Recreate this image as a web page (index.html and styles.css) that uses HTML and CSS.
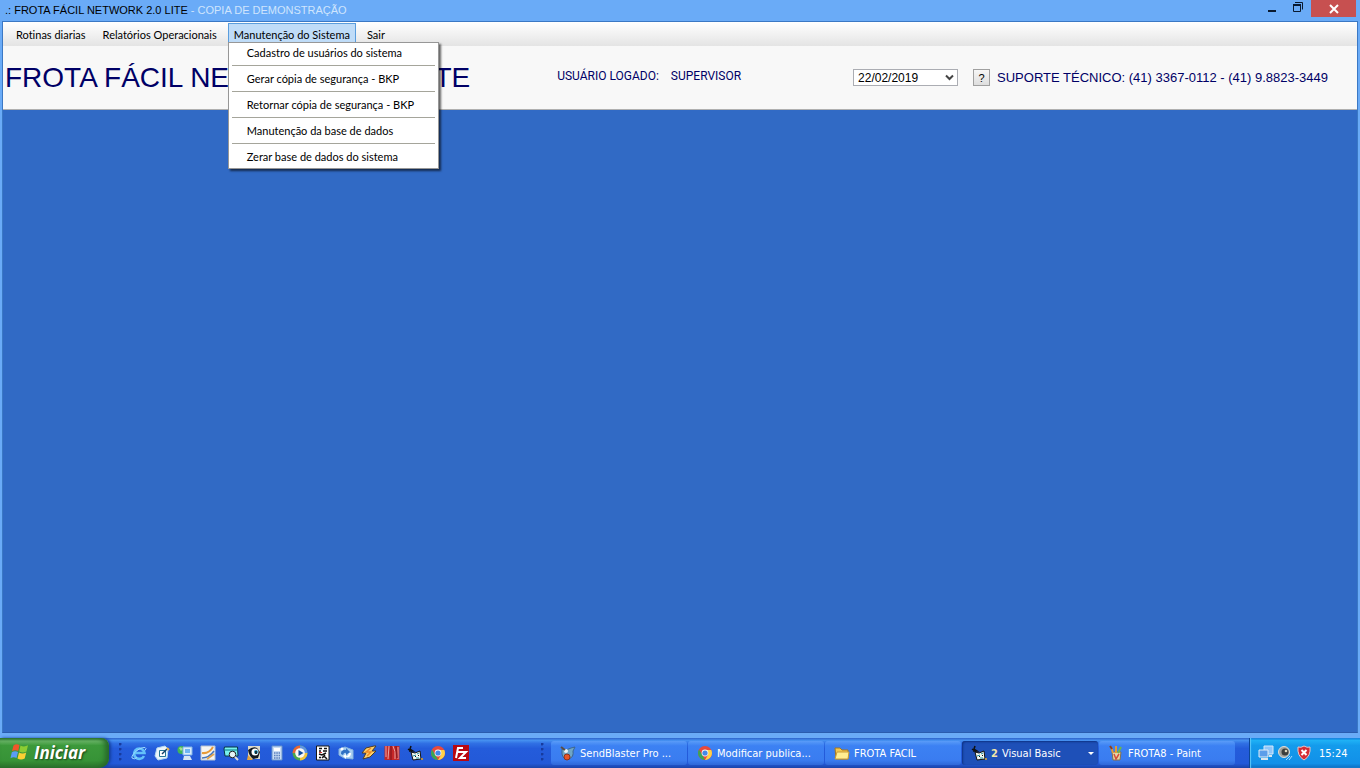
FILE: index.html
```
<!DOCTYPE html>
<html lang="pt-BR">
<head>
    <meta charset="UTF-8">
    <meta name="viewport" content="width=device-width, initial-scale=1.0">
    <title>Frota Fácil Network 2.0 Lite</title>
    <link rel="stylesheet" href="styles.css">
</head>
<body>
    <div class="window">
        <header class="title-bar">
            <div class="title-text">.: FROTA FÁCIL NETWORK 2.0 LITE <span class="demo">- COPIA DE DEMONSTRAÇÃO</span></div>
            <div class="window-buttons">
                <button class="win-btn" aria-label="Minimizar">
                    <svg width="10" height="12" viewBox="0 0 10 12"><rect x="1" y="9" width="8" height="2" fill="#0a1a30"/></svg>
                </button>
                <button class="win-btn" aria-label="Restaurar">
                    <svg width="12" height="12" viewBox="0 0 12 12" fill="none" stroke="#0a1a30"><path d="M1 3.500h8M1.500 3v7.500h7v-7.500M1 4.500h8M3 1.500h7.500v7"/></svg>
                </button>
                <button class="win-btn close" aria-label="Fechar">
                    <svg width="10" height="10" viewBox="0 0 10 10" stroke="#fff" stroke-width="2"><path d="M1 1l8 8M9 1l-8 8"/></svg>
                </button>
            </div>
        </header>

        <div class="client">
            <nav class="menu-bar">
                <button class="menu">Rotinas diarias</button>
                <button class="menu">Relatórios Operacionais</button>
                <div class="menu-open">
                    <button class="menu active">Manutenção do Sistema</button>
                    <div class="dropdown">
                        <button class="item">Cadastro de usuários do sistema</button>
                        <hr>
                        <button class="item">Gerar cópia de segurança - BKP</button>
                        <hr>
                        <button class="item">Retornar cópia de segurança - BKP</button>
                        <hr>
                        <button class="item">Manutenção da base de dados</button>
                        <hr>
                        <button class="item">Zerar base de dados do sistema</button>
                    </div>
                </div>
                <button class="menu">Sair</button>
            </nav>

            <section class="info-bar">
                <h1>FROTA FÁCIL NETWORK&nbsp;&nbsp; 2.0&nbsp; LITE</h1>
                <p class="user"><span>USUÁRIO LOGADO:</span><span>SUPERVISOR</span></p>
                <div class="support">
                    <div class="date-box">
                        <select class="date" aria-label="Data">
                            <option>22/02/2019</option>
                        </select>
                        <svg class="arrow" width="9" height="7" viewBox="0 0 9 7" fill="none" stroke="#444" stroke-width="2"><path d="M1 1.500l3.500 3.500l3.500-3.500"/></svg>
                    </div>
                    <button class="help">?</button>
                    <span class="phone">SUPORTE TÉCNICO: (41) 3367-0112 - (41) 9.8823-3449</span>
                </div>
            </section>

            <main class="workspace"></main>
        </div>
    </div>

    <footer class="taskbar">
        <button class="start">
            <svg width="20" height="18" viewBox="0 0 20 18">
                <path d="M3.500 2.500Q6 .5 9.500 2L8.200 8Q5 6.500 2 8.200Z" fill="#f0562a"/>
                <path d="M10.500 2.500Q14 4.500 18 2.300L16.500 8.500Q13 10.300 9.200 8.500Z" fill="#8ccc33"/>
                <path d="M1.800 9.200Q5 7.500 8 9L6.500 15Q3.500 13.600 .5 15.200Z" fill="#5b9cf5"/>
                <path d="M9 9.500Q12.500 11.300 16.200 9.500L14.700 15.500Q11 17.500 7.500 15.500Z" fill="#fbd033"/>
            </svg>
            Iniciar
        </button>

        <div class="quick-launch">
            <div class="grip"></div>
            <svg viewBox="0 0 16 16" fill="none"><path d="M13 11a5.200 5.200 0 1 1 .5-3H4" stroke="#63c1fa" stroke-width="2.600"/><path d="M1 13C0 10 8 2 14 2.500q2 .5 0 3M1 13q2 2 5-.5" stroke="#9fdcff" stroke-width="1"/></svg>
            <svg viewBox="0 0 16 16"><path d="M3 3l8-2l3 3l-1 9l-9 2l-3-4z" fill="#e9f5fb" stroke="#b5d8f0"/><path d="M5.500 5.500h6v6h-6z" fill="#fff" stroke="#257796"/><path d="M8 9l5-5" stroke="#123f67" stroke-width="1.500" fill="none"/><path d="M13 3l2 2" stroke="#eab54d" stroke-width="2"/></svg>
            <svg viewBox="0 0 16 16"><circle cx="4.500" cy="5" r="4" fill="#40b35b"/><path d="M2 3q2-2 4 1l-2 2z" fill="#a8dc8c"/><path d="M6 2h9v8H6z" fill="#d9ecfc" stroke="#83b6e8"/><path d="M8 4h5v4H8z" fill="#70b5f3"/><path d="M7 11h6l2 4H6z" fill="#d8e5f2"/></svg>
            <svg viewBox="0 0 16 16"><path d="M1 1h14v14H1z" fill="#f4f5f3" stroke="#b7c4d1"/><path d="M2 8q7 1 11-6" stroke="#e79b38" stroke-width="2" fill="none"/><path d="M2 13q7 0 12-7" stroke="#4777b9" stroke-width="1.500" fill="none"/><path d="M7 14l7-5" stroke="#e1a34e" stroke-width="2"/></svg>
            <svg viewBox="0 0 16 16"><path d="M1.500 2h13l.5 9H2L1 4z" fill="#77f1ed" stroke="#073444"/><path d="M1 5h14" stroke="#087783"/><circle cx="9.500" cy="9.500" r="3.300" fill="#e5f4f6" stroke="#222"/><path d="M12 12l3 3" stroke="#ddd" stroke-width="2"/></svg>
            <svg viewBox="0 0 16 16"><path d="M2 1h12v13H2z" fill="#dbdacd"/><path d="M2 5q5-4 9-2l3 4l-2 6l-5 1q-4-3-5-9z" fill="#131a20"/><circle cx="9" cy="7" r="3.500" fill="#fff"/><circle cx="10" cy="7" r="2" fill="#2794bb"/><path d="M2 10l5 5H1z" fill="#e4a33c"/><path d="M10 6v3" stroke="#111" stroke-width="1.500"/></svg>
            <svg viewBox="0 0 16 16"><path d="M3 1h10v14H3z" fill="#c8dcf4" stroke="#6792cb"/><path d="M5 3h6v3H5z" fill="#fff"/><path d="M5 8h6M5 10.500h6M5 13h6" stroke="#587ebc" stroke-width="1.500" stroke-dasharray="1.500 .8"/></svg>
            <svg viewBox="0 0 16 16"><circle cx="8" cy="8" r="7.500" fill="#4aa64d"/><path d="M8 8V.5A7.500 7.500 0 0 0 .5 8z" fill="#e66339"/><path d="M8 8V.5A7.500 7.500 0 0 1 15.500 8z" fill="#6194df"/><path d="M8 8h7.500A7.500 7.500 0 0 1 8 15.500z" fill="#f1c33b"/><circle cx="8" cy="8" r="4.800" fill="#f8f8f5"/><path d="M6.500 5l5 3l-5 3z" fill="#124c9a"/></svg>
            <svg viewBox="0 0 16 16"><path d="M1.500 1h12.500v14H1.500z" fill="#fff" stroke="#161616"/><path d="M4 3.500h3M9 3.500h3M4 6h2M8 6h4M4 9l3 1l4-2M4 12.500h2M9 11l3 3M7 13l3-3" fill="none" stroke="#111" stroke-width="1.500"/><path d="M4 7.500h3" stroke="#c33"/></svg>
            <svg viewBox="0 0 16 16"><path d="M1 4l6-2l8 3v9l-9-1l-5-3z" fill="#a9cff2" stroke="#87b5df"/><path d="M3 9q0-5 5-4V3l4 4l-4 3V8Q6 7 5 10z" fill="#2f70c4"/><path d="M13 8q0 5-5 4v2l-3-3l3-2v2q2 1 3-3z" fill="#fff"/><circle cx="4" cy="4" r="1.500" fill="#fff"/></svg>
            <svg viewBox="0 0 16 16"><path d="M13 1L5 3L1 8h4l-3 6l7-2l6-6h-4l4-5z" fill="#ffd26b" stroke="#4f3d25"/><path d="M10 3L5 7h5l-4 4" stroke="#f28922" stroke-width="1.500" fill="none"/></svg>
            <svg viewBox="0 0 16 16"><path d="M.5 1h15v14H.5z" fill="#c52727"/><path d="M2 1v11M5 1l-1 13M9 1q3 5 2 13M14 2v12" stroke="#eba4a2" stroke-width="1" fill="none"/><path d="M7 1v14M12 1l1 12" stroke="#931a20" stroke-width="1.500"/></svg>
            <svg viewBox="0 0 16 16"><path d="M4 1L3 4l3 2l-4 0M1 4l4 3" stroke="#101010" stroke-width="1.500" fill="none"/><path d="M4 7l4 1l5-2l1 8l-8 1z" fill="#f4f8f0" stroke="#111"/><path d="M6 11l3-1M10 9l2-1M9 13h3" stroke="#1f8f9f"/><path d="M8 11h1v1H8zM11 10h1v1h-1z" fill="#111"/><path d="M14 13h2v2h-2z" fill="#b48d48"/></svg>
            <svg viewBox="0 0 16 16"><circle cx="8" cy="8" r="7" fill="#e84a3c"/><path d="M2 4.500L7 13l1 2A7 7 0 0 1 2 4.500z" fill="#37a756"/><path d="M8 5h6.300A7 7 0 0 1 8 15l3-5z" fill="#ffd146"/><circle cx="8" cy="8" r="3.400" fill="#f5f5f5"/><circle cx="8" cy="8" r="2.600" fill="#4388e8"/></svg>
            <svg viewBox="0 0 16 16"><path d="M0 0h16v16H0z" fill="#b90811"/><path d="M3 13L5 3h5M4 7h4M8 7h5l-6 6h6" stroke="#fff" stroke-width="2" fill="none"/></svg>
        </div>

        <div class="tasks">
            <div class="grip"></div>
            <button class="task">
                <svg viewBox="0 0 16 16"><path d="M2 4l4 1l5-2l4-1l-2 4q1 6-4 8q-6 1-7-5z" fill="#6fa6c6" stroke="#3c6690"/><circle cx="6" cy="6" r="2" fill="#eaf4f7"/><circle cx="7" cy="12" r="3" fill="#e85525" stroke="#8d321d"/><path d="M1 2l4 3" stroke="#5c4e43" stroke-width="2"/></svg>
                <span>SendBlaster Pro ...</span>
            </button>
            <button class="task">
                <svg viewBox="0 0 16 16"><circle cx="8" cy="8" r="7" fill="#e84a3c"/><path d="M2 4.500L7 13l1 2A7 7 0 0 1 2 4.500z" fill="#37a756"/><path d="M8 5h6.300A7 7 0 0 1 8 15l3-5z" fill="#ffd146"/><circle cx="8" cy="8" r="3.400" fill="#f5f5f5"/><circle cx="8" cy="8" r="2.600" fill="#4388e8"/></svg>
                <span>Modificar publica...</span>
            </button>
            <button class="task">
                <svg viewBox="0 0 16 16"><path d="M1 3h5l2 2h6v9H2z" fill="#f4c84c" stroke="#a47722"/><path d="M3 7h12l-1 7H1z" fill="#ffed91" stroke="#c79a38"/></svg>
                <span>FROTA FACIL</span>
            </button>
            <button class="task pressed">
                <svg viewBox="0 0 16 16"><path d="M4 1L3 4l3 2l-4 0M1 4l4 3" stroke="#101010" stroke-width="1.500" fill="none"/><path d="M4 7l4 1l5-2l1 8l-8 1z" fill="#f4f8f0" stroke="#111"/><path d="M6 11l3-1M10 9l2-1M9 13h3" stroke="#1f8f9f"/><path d="M8 11h1v1H8zM11 10h1v1h-1z" fill="#111"/><path d="M14 13h2v2h-2z" fill="#b48d48"/></svg>
                <b>2</b>
                <span>Visual Basic</span>
                <i class="more"></i>
            </button>
            <button class="task">
                <svg viewBox="0 0 16 16"><path d="M4 7h9l-1 8H5z" fill="#e5d6a5" stroke="#80704f"/><path d="M5 8L3 2M8 8V1" stroke="#e39b36" stroke-width="2"/><path d="M10 8l3-6" stroke="#6bb64b" stroke-width="2"/><path d="M6 9l2 5l3-5" stroke="#d44f3b" stroke-width="1.500" fill="none"/><path d="M2 1l2 3" stroke="#863f29" stroke-width="2"/></svg>
                <span>FROTA8 - Paint</span>
            </button>
        </div>

        <div class="tray">
            <svg viewBox="0 0 16 16"><path d="M6 1h9v8H6z" fill="#8fc6fa" stroke="#d5e9fa"/><path d="M1 5h9v7H1z" fill="#5c9eea" stroke="#e1edf5"/><path d="M3 14h7M11 11h3" stroke="#d8e5ed" stroke-width="2"/></svg>
            <svg viewBox="0 0 16 16"><circle cx="7" cy="7" r="5.500" fill="#a1a29c" stroke="#dedfd9"/><circle cx="8" cy="7" r="3.500" fill="#3c3f3c"/><circle cx="9" cy="6" r="1.300" fill="#dcd6bd"/><path d="M9 15l4-4M12 15l3-4" stroke="#a8dcff"/></svg>
            <svg viewBox="0 0 16 16"><path d="M8 1q3 2 6 1q1 9-6 13q-7-4-6-13q3 1 6-1z" fill="#d52c34" stroke="#edc4c4"/><path d="M5.500 5l5 5M10.500 5l-5 5" stroke="#fff" stroke-width="2"/></svg>
            <time>15:24</time>
        </div>
    </footer>
</body>
</html>
```
FILE: styles.css
```
* {
    box-sizing: border-box;
}

body {
    margin: 0;
    height: 100vh;
    display: flex;
    flex-direction: column;
    overflow: hidden;
    background: #316ac5;
    font-family: "DejaVu Sans Condensed", "Liberation Sans", sans-serif;
    font-size: 11px;
    color: #000;
}

button {
    border: 0;
    padding: 0;
    background: none;
    font: inherit;
    color: inherit;
}

svg {
    display: block;
    flex: none;
}

/* application window */
.window {
    flex: 1;
    display: flex;
    flex-direction: column;
    background: #6aabf7;
    padding: 0 2px 5px;
}

.title-bar {
    display: flex;
    justify-content: space-between;
    height: 21px;
    padding-right: 2px;
    font-family: "Liberation Sans", sans-serif;
}

.title-text {
    padding-left: 3px;
    line-height: 21px;
    white-space: nowrap;
}

.demo {
    color: #cfe5fd;
}

.window-buttons {
    display: flex;
}

.win-btn {
    display: flex;
    align-items: center;
    justify-content: center;
    width: 26px;
    height: 14px;
}

.win-btn.close {
    width: 45px;
    height: 17px;
    background: #c75050;
}

.client {
    flex: 1;
    display: flex;
    flex-direction: column;
    border: 1px solid #3b78c4;
    border-bottom-color: #2a5cae;
}

.menu-bar {
    display: flex;
    height: 24px;
    padding: 1px 0 0 7px;
    background: linear-gradient(#fff, #e4e4e4);
    font-family: Lato, sans-serif;
}

.menu-bar button {
    font-variant-ligatures: none;
}

.menu {
    height: 22px;
    margin-right: 5px;
    padding: 0 5px;
    border: 1px solid transparent;
    white-space: nowrap;
}

.menu-open {
    position: relative;
}

.menu.active {
    border-color: #5a9ddd;
    background: #bfdcf8;
}

.dropdown {
    position: absolute;
    top: 19px;
    left: 0;
    z-index: 1;
    width: 211px;
    padding: 0 3px 1px;
    border: 1px solid #979797;
    background: #fff;
    box-shadow: 2px 2px 2px rgba(0, 0, 0, 0.6);
}

.item {
    display: block;
    width: 100%;
    height: 20px;
    padding: 0 0 2px 15px;
    text-align: left;
    white-space: nowrap;
}

.dropdown hr {
    height: 1px;
    margin: 2px 0 3px;
    border: 0;
    background: #a5a59b;
}

.info-bar {
    display: flex;
    align-items: center;
    height: 64px;
    padding: 0 29px 0 2px;
    border-bottom: 1px solid #b0b0b0;
    background: #f8f8f8;
    color: #000066;
    font-family: "Liberation Sans", sans-serif;
    white-space: nowrap;
}

h1 {
    margin: 0;
    font-size: 28px;
    font-weight: normal;
}

.user {
    display: flex;
    gap: 12px;
    margin: 0 0 3px 87px;
    font-family: Roboto, sans-serif;
    font-size: 12px;
}

.support {
    display: flex;
    align-items: center;
    margin-left: auto;
}

.date-box {
    position: relative;
}

.date {
    appearance: none;
    display: block;
    width: 105px;
    height: 17px;
    padding: 0 4px;
    border: 1px solid #abadb3;
    border-radius: 0;
    background: #fff;
    color: #000;
    font-family: "Liberation Sans", sans-serif;
    font-size: 12px;
}

.arrow {
    position: absolute;
    top: 5px;
    right: 4px;
    pointer-events: none;
}

.help {
    width: 17px;
    height: 17px;
    margin: 0 7px 0 15px;
    border: 1px solid #a0a0a0;
    background: linear-gradient(#f6f6f6, #dedede);
    color: #000;
}

.phone {
    font-size: 13px;
}

.workspace {
    flex: 1;
    background: #316ac5;
}

/* taskbar */
.taskbar {
    display: flex;
    height: 30px;
    background: linear-gradient(#2e63cb, #4590f0 8%, #3070e4 18%, #245cdb 35%, #2359d8 85%, #1b44a8);
    color: #fff;
}

.start {
    display: flex;
    align-items: center;
    gap: 4px;
    width: 109px;
    padding: 0 0 2px 10px;
    border-radius: 0 8px 10px 0;
    background: linear-gradient(#2c7a2c, #68b566 10%, #3c993b 25%, #379337 75%, #2b742b);
    box-shadow: inset -4px 0 5px #27692b, 2px 0 3px #153f9c;
    font-family: "Open Sans", sans-serif;
    font-size: 17px;
    font-weight: bold;
    font-style: italic;
    text-shadow: 1px 1px 2px #163f17;
}

.taskbar svg:not(.start svg) {
    width: 16px;
    height: 16px;
}

.quick-launch {
    display: flex;
    align-items: center;
    gap: 7px;
    width: 430px;
    padding-left: 10px;
}

.grip {
    flex: none;
    width: 5px;
    height: 20px;
    background:
        radial-gradient(circle at 1px 1px, #173b9e 1px, transparent 2px) 0 0 / 5px 5px;
}

.tasks {
    flex: 1;
    display: flex;
    align-items: center;
    gap: 1px;
    padding: 3px 14px 3px 2px;
}

.tasks .grip {
    margin-right: 4px;
}

.task {
    flex: 1;
    display: flex;
    align-items: center;
    gap: 4px;
    min-width: 0;
    height: 24px;
    padding: 0 4px 0 9px;
    border-radius: 3px;
    background: linear-gradient(#5a9cf8, #3c81f3 20%, #3a7cf0 80%, #2f68d8);
    white-space: nowrap;
}

.task.pressed {
    background: #1e50b8;
    box-shadow: inset 1px 1px 2px #0e3284;
}

.task b {
    color: #f3e6a8;
}

.more {
    margin-left: auto;
    border: 3px solid transparent;
    border-top-color: #fff;
    border-bottom: 0;
}

.tray {
    display: flex;
    align-items: center;
    gap: 3px;
    width: 111px;
    padding-left: 8px;
    border-left: 1px solid #0b4797;
    background: linear-gradient(#0f75d8, #1fb1f5 8%, #149bec 25%, #1290e8 85%, #0d6cc0);
    box-shadow: inset 1px 0 1px #5cc8fa;
}

.tray time {
    margin-left: 4px;
}
```
